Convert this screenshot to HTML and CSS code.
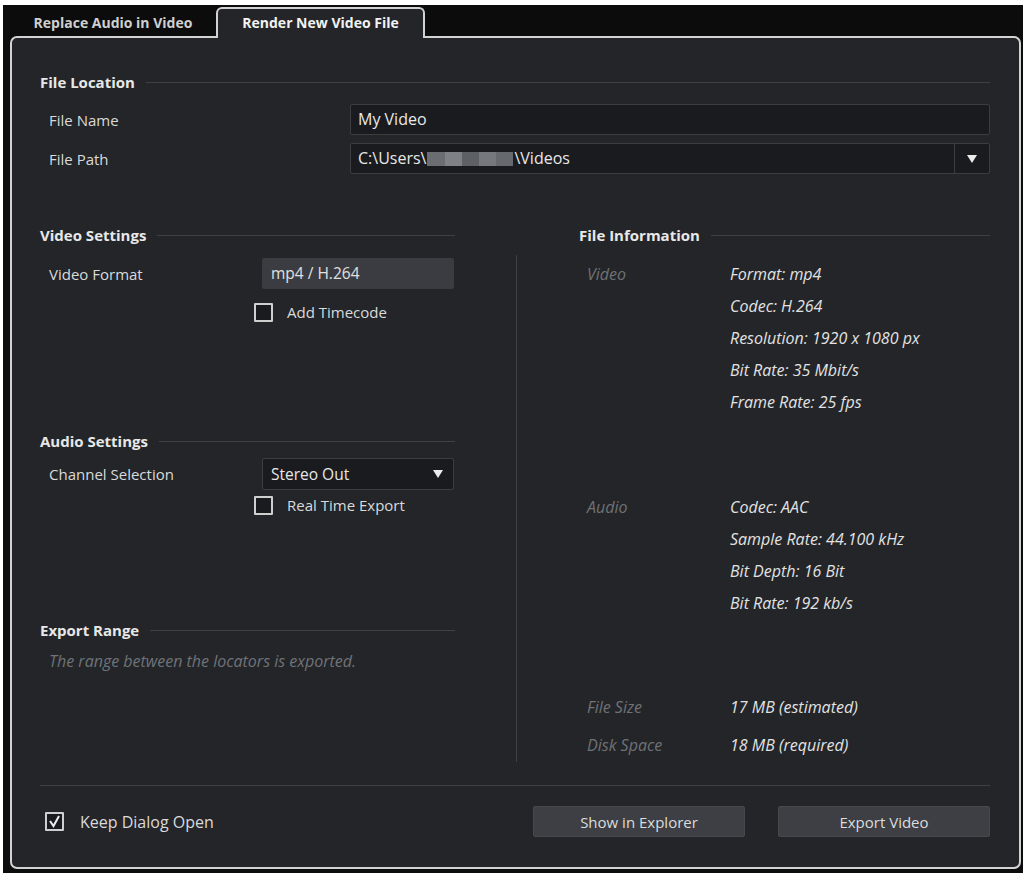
FILE: index.html
```html
<!DOCTYPE html>
<html lang="en">
<head>
    <meta charset="UTF-8">
    <meta name="viewport" content="width=device-width, initial-scale=1.0">
    <title>Export Video</title>
    <link rel="stylesheet" href="styles.css">
</head>
<body>
<div class="window">

    <!-- Tabs -->
    <div class="tabs">
        <div class="tab">Replace Audio in Video</div>
        <div class="tab active">Render New Video File</div>
    </div>

    <div class="panel">

        <!-- File Location -->
        <div class="title">File Location</div>
        <div class="row first">
            <label class="wide">File Name</label>
            <div class="input big">My Video</div>
        </div>
        <div class="row second">
            <label class="wide">File Path</label>
            <div class="input big select">
                <span class="path">C:\Users\<span class="blur"><i class="b1"></i><i class="b2"></i><i class="b3"></i><i class="b4"></i><i class="b5"></i></span>\Videos</span>
                <span class="arrow split"><svg width="10" height="8" viewBox="0 0 10 8"><polygon points="0,0 10,0 5,8" fill="#ececec"/></svg></span>
            </div>
        </div>

        <div class="columns">

            <!-- Left column -->
            <div class="left">
                <div class="title">Video Settings</div>
                <div class="row field-row">
                    <label>Video Format</label>
                    <div class="field">mp4 / H.264</div>
                </div>
                <div class="check-row timecode">
                    <span class="box"></span>
                    <span>Add Timecode</span>
                </div>

                <div class="title audio">Audio Settings</div>
                <div class="row select-row">
                    <label>Channel Selection</label>
                    <div class="input small">
                        <span>Stereo Out</span>
                        <span class="arrow"><svg width="10" height="8" viewBox="0 0 10 8"><polygon points="0,0 10,0 5,8" fill="#ececec"/></svg></span>
                    </div>
                </div>
                <div class="check-row realtime">
                    <span class="box"></span>
                    <span>Real Time Export</span>
                </div>

                <div class="title range">Export Range</div>
                <p class="note">The range between the locators is exported.</p>
            </div>

            <div class="divider"></div>

            <!-- Right column -->
            <div class="right">
                <div class="title">File Information</div>
                <div class="info video">
                    <span class="key">Video</span>
                    <div class="values">
                        <div>Format: mp4</div>
                        <div>Codec: H.264</div>
                        <div>Resolution: 1920 x 1080 px</div>
                        <div>Bit Rate: 35 Mbit/s</div>
                        <div>Frame Rate: 25 fps</div>
                    </div>
                </div>
                <div class="info audio">
                    <span class="key">Audio</span>
                    <div class="values">
                        <div>Codec: AAC</div>
                        <div>Sample Rate: 44.100 kHz</div>
                        <div>Bit Depth: 16 Bit</div>
                        <div>Bit Rate: 192 kb/s</div>
                    </div>
                </div>
                <div class="info size">
                    <span class="key">File Size</span>
                    <div class="values"><div>17 MB (estimated)</div></div>
                </div>
                <div class="info disk">
                    <span class="key">Disk Space</span>
                    <div class="values"><div>18 MB (required)</div></div>
                </div>
            </div>
        </div>

        <div class="separator"></div>

        <!-- Bottom bar -->
        <div class="bottom">
            <div class="check-row keep">
                <span class="box"><svg width="15" height="15" viewBox="0 0 15 15"><polyline points="3,7 6.5,12 12,2" fill="none" stroke="#ececec" stroke-width="2"/></svg></span>
                <span>Keep Dialog Open</span>
            </div>
            <button class="btn explorer">Show in Explorer</button>
            <button class="btn">Export Video</button>
        </div>
    </div>
</div>
</body>
</html>
```

FILE: styles.css
```css
body{ margin: 0; background: #ffffff; font-family: "Open Sans", sans-serif; font-size: 15px; color: #d9d9d9; }
.window{ margin: 5px 3px 0 3px; height: 868px; background: #0c0c0d; }

/* tabs */
.tabs{ display: flex; height: 31px; padding: 2px 0 0 17px; box-sizing: border-box; }
.tab{ width: 196px; height: 29px; box-sizing: border-box; padding-right: 10px; line-height: 32px; text-align: center; font-weight: 700; font-size: 14px; color: #cfcfcf; }
.tab.active{ width: 209px; height: 31px; padding-right: 0; line-height: 28px; border: 2px solid #d2d2d2; border-bottom: none; border-radius: 6px 6px 0 0; background: #232529; color: #f2f2f2; position: relative; z-index: 1; }

/* panel */
.panel{ margin: 0 2px 0 7px; height: 833px; box-sizing: border-box; border: 2px solid #d2d2d2; border-radius: 7px; background: #232529; padding: 34px 29px 0 28px; }
.title{ display: flex; align-items: center; gap: 11px; height: 20px; line-height: 20px; font-weight: 700; color: #e8e8e8; }
.title::after{ content: ""; flex: 1; height: 1px; background: #3e4044; }

.row{ display: flex; align-items: center; height: 31px; }
.row label{ width: 213px; padding-left: 9px; color: #dadada; }
.row label.wide{ width: 301px; }
.row.first{ margin-top: 12px; }
.row.second{ margin-top: 8px; }

.input{ flex: 1; height: 31px; box-sizing: border-box; background: #1a1b1e; border: 1px solid #3b3d41; border-radius: 2px; padding-left: 7px; line-height: 29px; color: #e8e8e8; display: flex; align-items: center; }
.input.big{ font-size: 16px; }
.input .path{ flex: 1; display: flex; align-items: center; }
.blur{ display: inline-flex; height: 14px; width: 86px; margin: 0 1px; }
.blur i{ flex: 1; }
.b1{ background: #6a6d71; }
.b2{ background: #7e8185; }
.b3{ background: #5d6064; }
.b4{ background: #75787c; }
.b5{ background: #66696d; }
.arrow{ display: flex; align-items: center; justify-content: center; width: 34px; height: 100%; }
.arrow.split{ border-left: 1px solid #3b3d41; }
.input.small{ flex: none; width: 192px; height: 32px; padding-left: 8px; font-size: 15.5px; }
.input.small span:first-child{ flex: 1; }
.input.small .arrow{ width: 30px; }

/* columns */
.columns{ display: flex; margin-top: 51px; height: 545px; }
.left{ width: 415px; }
.divider{ width: 1px; background: #3e4044; margin: 30px 0 8px 61px; }
.right{ width: 411px; margin-left: 62px; }

.field-row{ margin-top: 13px; }
.field{ width: 192px; height: 31px; box-sizing: border-box; background: #3a3c41; border-radius: 2px; padding-left: 9px; line-height: 31px; color: #e0e0e0; font-size: 15.5px; }
.select-row{ margin-top: 7px; height: 32px; }

.check-row{ display: flex; align-items: center; gap: 14px; color: #dadada; }
.box{ width: 19px; height: 19px; box-sizing: border-box; border: 2px solid #cfcfcf; background: #1a1b1e; border-radius: 1px; display: flex; align-items: center; justify-content: center; }
.timecode{ margin: 7px 0 0 214px; height: 32px; }
.realtime{ margin-left: 214px; height: 30px; }
.title.audio{ margin-top: 103px; }
.title.range{ margin-top: 100px; }
.note{ margin: 11px 0 0 0; padding-left: 9px; line-height: 20px; font-size: 16px; font-style: italic; color: #707378; }

/* file information */
.info{ display: flex; line-height: 32px; font-size: 16px; font-style: italic; }
.info .key{ width: 143px; padding-left: 8px; color: #6f7276; }
.info .values{ color: #e2e2e2; }
.info.video{ margin-top: 13px; }
.info.audio{ margin-top: 73px; }
.info.size{ margin-top: 72px; }
.info.disk{ margin-top: 6px; }

/* bottom */
.separator{ height: 1px; background: #3e4044; margin-top: 15px; }
.bottom{ display: flex; align-items: center; height: 31px; margin-top: 20px; }
.keep{ margin-left: 5px; gap: 16px; font-size: 16px; }
.btn{ width: 212px; height: 31px; background: #3d3f44; border: 1px solid #46484d; border-radius: 2px; color: #dcdcdc; font-family: "Open Sans", sans-serif; font-size: 15px; padding: 0; }
.explorer{ margin-left: auto; margin-right: 33px; }
```
